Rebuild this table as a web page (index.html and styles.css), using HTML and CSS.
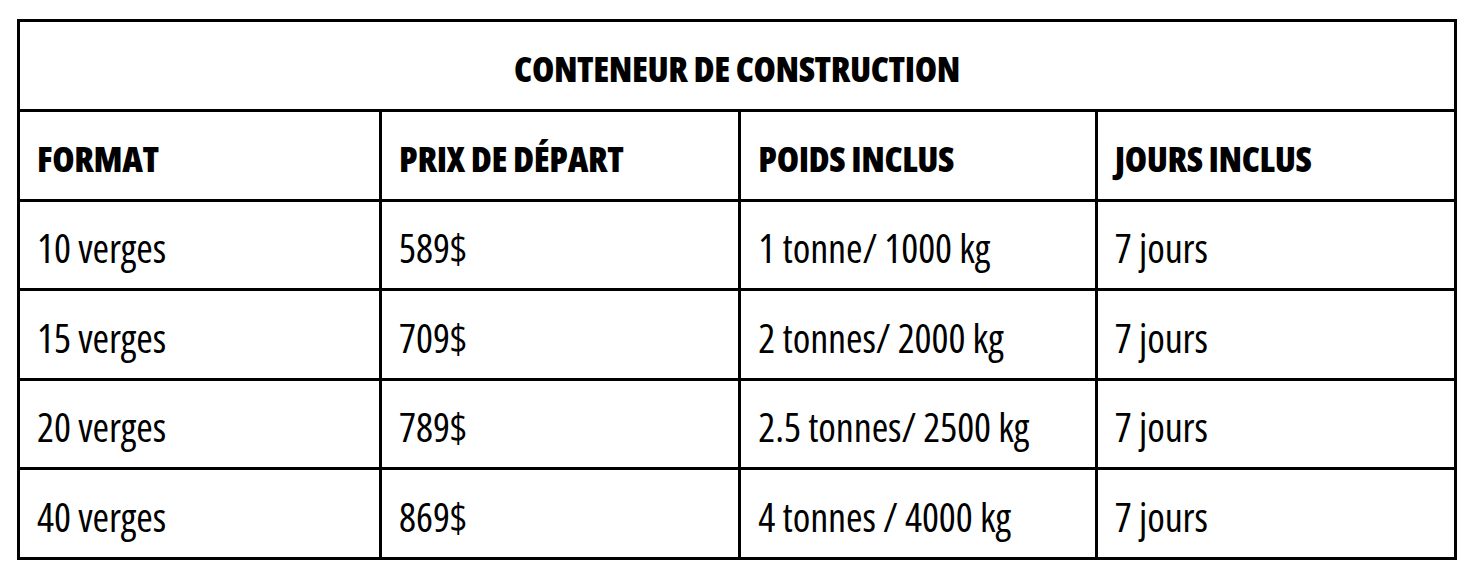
FILE: index.html
```html
<!DOCTYPE html>
<html lang="fr">
<head>
<meta charset="utf-8">
<title>Conteneur de construction</title>
<link rel="stylesheet" href="styles.css">
</head>
<body>
<div class="wrap">
  <table class="price-table">
    <colgroup>
      <col class="c1"><col class="c2"><col class="c3"><col class="c4">
    </colgroup>
    <thead>
      <tr class="title-row"><th colspan="4" class="title">CONTENEUR DE CONSTRUCTION</th></tr>
      <tr class="head-row">
        <th>FORMAT</th>
        <th>PRIX DE DÉPART</th>
        <th>POIDS INCLUS</th>
        <th>JOURS INCLUS</th>
      </tr>
    </thead>
    <tbody>
      <tr><td>10 verges</td><td>589$</td><td>1 tonne/ 1000 kg</td><td>7 jours</td></tr>
      <tr><td>15 verges</td><td>709$</td><td>2 tonnes/ 2000 kg</td><td>7 jours</td></tr>
      <tr><td>20 verges</td><td>789$</td><td>2.5 tonnes/ 2500 kg</td><td>7 jours</td></tr>
      <tr><td>40 verges</td><td>869$</td><td>4 tonnes / 4000 kg</td><td>7 jours</td></tr>
    </tbody>
  </table>
</div>
</body>
</html>
```
FILE: styles.css
```css
html, body {
  margin: 0;
  padding: 0;
  background: #fff;
}
body {
  font-family: "Open Sans", "DejaVu Sans Condensed", sans-serif;
  font-stretch: 75%;
  color: #000;
}
.wrap {
  padding: 19px 21px 0 17px;
}
.price-table {
  width: 100%;
  border-collapse: collapse;
  table-layout: fixed;
  border: 3px solid #000;
}
.c1 { width: 25.2%; }
.c2 { width: 25%; }
.c3 { width: 24.8%; }
.c4 { width: 25%; }
.price-table th,
.price-table td {
  border: 3px solid #000;
  text-align: left;
  vertical-align: middle;
  padding: 6px 17px 0 17px;
  white-space: nowrap;
}
.price-table th {
  font-family: "Open Sans", "DejaVu Sans Condensed", sans-serif;
  font-stretch: 75%;
  font-weight: 800;
  font-size: 36px;
  letter-spacing: -0.4px;
}
.price-table td {
  font-family: "Open Sans", "DejaVu Sans Condensed", sans-serif;
  font-stretch: 75%;
  font-weight: 400;
  font-size: 40px;
  letter-spacing: -0.1px;
}
.price-table .title {
  text-align: center;
  padding-left: 0;
  padding-right: 0;
}
.price-table tr {
  height: 89.5px;
}
.price-table .title-row {
  height: 90px;
}
```
